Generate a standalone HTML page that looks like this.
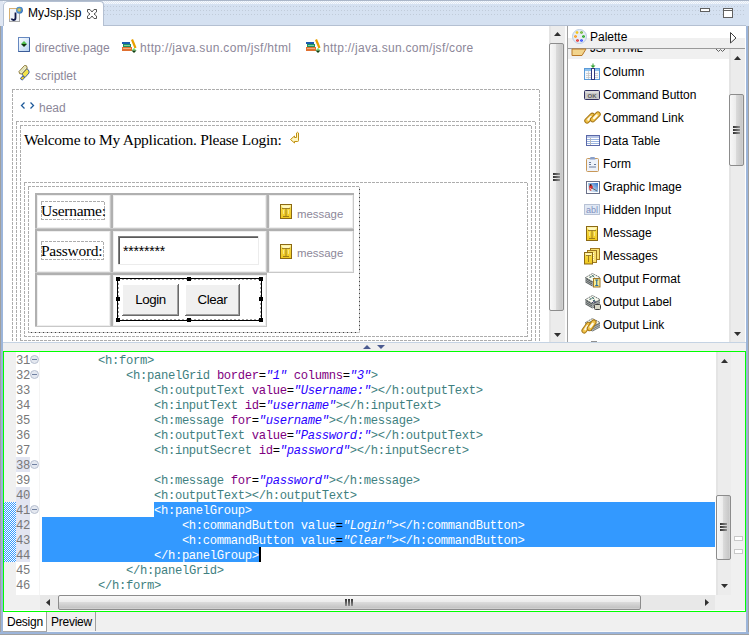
<!DOCTYPE html>
<html><head><meta charset="utf-8"><style>
*{margin:0;padding:0;box-sizing:border-box}
html,body{width:749px;height:635px;overflow:hidden;background:#f0f0f0;font-family:"Liberation Sans",sans-serif;font-size:12px;color:#000}
.a{position:absolute;white-space:nowrap}
.lbl{color:#8c8799;font-size:12px}
.code{left:42px;font-family:"Liberation Mono",monospace;font-size:12.2px;letter-spacing:-0.32px;line-height:15px;padding-top:2px;white-space:pre;color:#000}
.sel span{color:#fff!important}
.t{color:#3f7f7f}.n{color:#7f007f}.v{color:#2a00ff;font-style:italic}
.ln{left:16px;font-family:"Liberation Mono",monospace;font-size:12.2px;letter-spacing:-0.32px;line-height:15px;padding-top:2px;color:#787878}
.pi{left:603px;font-size:12px;color:#000}
.serif{font-family:"Liberation Serif",serif;font-size:15.5px;letter-spacing:-0.27px}
.msg{font-size:11.4px}
.btn{font-size:13.33px;letter-spacing:-0.4px;text-align:center;line-height:31px}
svg{position:absolute;overflow:visible}
</style></head><body>
<div class="a" style="left:0px;top:0px;width:749px;height:26px;background:#d5e1f1;"></div>
<div class="a" style="left:104px;top:6px;width:641px;height:12px;background:repeating-linear-gradient(90deg,#bcc6d4 0 1px,transparent 1px 3px);-webkit-mask:repeating-linear-gradient(180deg,#000 0 1px,transparent 1px 4px);opacity:.8"></div>
<div class="a" style="left:0px;top:1px;width:749px;height:3px;background:conic-gradient(#f6f9fd 25%,#dfe8f4 0 50%,#f6f9fd 0 75%,#dfe8f4 0);background-size:2px 2px"></div>
<div class="a" style="left:0px;top:0px;width:749px;height:1px;background:#aab6c8;"></div>
<div class="a" style="left:0px;top:1px;width:3px;height:25px;background:#dfe6f2;"></div>
<div class="a" style="left:0px;top:26px;width:1px;height:609px;background:#a0a0a0;"></div>
<div class="a" style="left:1px;top:26px;width:2px;height:609px;background:#9cb5da;"></div>
<div class="a" style="left:746px;top:26px;width:2px;height:609px;background:#9cb5da;"></div>
<div class="a" style="left:748px;top:26px;width:1px;height:609px;background:#a0a0a0;"></div>
<div class="a" style="left:0px;top:632px;width:749px;height:2px;background:#9cb5da;"></div>
<div class="a" style="left:0px;top:634px;width:749px;height:1px;background:#a0a0a0;"></div>
<div class="a" style="left:3px;top:25px;width:743px;height:1px;background:#b4c0d2;"></div>
<div class="a" style="left:3px;top:1px;width:101px;height:25px;background:#fff;border-top-left-radius:5px;border-top-right-radius:4px;border:1px solid #b4c0d2;border-bottom:none"></div>
<div class="a " style="left:28px;top:6px;">MyJsp.jsp</div>
<div class="a" style="left:3px;top:26px;width:546px;height:316px;background:#fff;"></div>
<div class="a" style="left:3px;top:342px;width:743px;height:1px;background:#c5d3e3;"></div>
<div class="a" style="left:549px;top:26px;width:16px;height:316px;background:#ececec;"></div>
<div class="a" style="left:549px;top:26px;width:2px;height:316px;background:#e4e4e4;"></div>
<div class="a" style="left:565px;top:26px;width:2px;height:316px;background:#fcfcfc;"></div>
<div class="a" style="left:567px;top:26px;width:1px;height:316px;background:#a0a0a0;"></div>
<div class="a" style="left:549px;top:43px;width:15px;height:268px;border:1px solid #8c8c8c;border-radius:2px;background:linear-gradient(90deg,#f8f8f8 0,#ececec 45%,#dadada 50%,#c8c8c8 90%,#d6d6d6 100%)"></div><div class="a" style="left:553px;top:173px;width:7px;height:2px;background:linear-gradient(90deg,#303030,#909090)"></div><div class="a" style="left:553px;top:176px;width:7px;height:2px;background:linear-gradient(90deg,#303030,#909090)"></div><div class="a" style="left:553px;top:179px;width:7px;height:2px;background:linear-gradient(90deg,#303030,#909090)"></div>
<div class="a" style="left:0;top:0;width:549px;height:342px;overflow:hidden"><div class="a lbl" style="left:35px;top:41px;">directive.page</div>
<div class="a lbl" style="left:140px;top:41px;letter-spacing:0.33px">http://java.sun.com/jsf/html</div>
<div class="a lbl" style="left:323px;top:41px;letter-spacing:0.28px">http://java.sun.com/jsf/core</div>
<div class="a lbl" style="left:35px;top:69px;">scriptlet</div>
<div class="a lbl" style="left:39px;top:101px;">head</div>
<div class="a" style="left:12px;top:89px;width:527px;height:1px;background:repeating-linear-gradient(90deg,#adadad 0 3px,transparent 3px 4px);"></div><div class="a" style="left:12px;top:400px;width:527px;height:1px;background:repeating-linear-gradient(90deg,#adadad 0 3px,transparent 3px 4px);"></div><div class="a" style="left:12px;top:90px;width:1px;height:311px;background:repeating-linear-gradient(180deg,#adadad 0 3px,transparent 3px 4px);"></div><div class="a" style="left:539px;top:90px;width:1px;height:311px;background:repeating-linear-gradient(180deg,#adadad 0 3px,transparent 3px 4px);"></div>
<div class="a" style="left:16px;top:121px;width:519px;height:1px;background:repeating-linear-gradient(90deg,#adadad 0 3px,transparent 3px 4px);"></div><div class="a" style="left:16px;top:400px;width:519px;height:1px;background:repeating-linear-gradient(90deg,#adadad 0 3px,transparent 3px 4px);"></div><div class="a" style="left:16px;top:122px;width:1px;height:279px;background:repeating-linear-gradient(180deg,#adadad 0 3px,transparent 3px 4px);"></div><div class="a" style="left:535px;top:122px;width:1px;height:279px;background:repeating-linear-gradient(180deg,#adadad 0 3px,transparent 3px 4px);"></div>
<div class="a" style="left:20px;top:125px;width:511px;height:1px;background:repeating-linear-gradient(90deg,#adadad 0 3px,transparent 3px 4px);"></div><div class="a" style="left:20px;top:340px;width:511px;height:1px;background:repeating-linear-gradient(90deg,#adadad 0 3px,transparent 3px 4px);"></div><div class="a" style="left:20px;top:126px;width:1px;height:215px;background:repeating-linear-gradient(180deg,#adadad 0 3px,transparent 3px 4px);"></div><div class="a" style="left:531px;top:126px;width:1px;height:215px;background:repeating-linear-gradient(180deg,#adadad 0 3px,transparent 3px 4px);"></div>
<div class="a" style="left:24px;top:182px;width:503px;height:1px;background:repeating-linear-gradient(90deg,#adadad 0 3px,transparent 3px 4px);"></div><div class="a" style="left:24px;top:336px;width:503px;height:1px;background:repeating-linear-gradient(90deg,#adadad 0 3px,transparent 3px 4px);"></div><div class="a" style="left:24px;top:183px;width:1px;height:154px;background:repeating-linear-gradient(180deg,#adadad 0 3px,transparent 3px 4px);"></div><div class="a" style="left:527px;top:183px;width:1px;height:154px;background:repeating-linear-gradient(180deg,#adadad 0 3px,transparent 3px 4px);"></div>
<div class="a" style="left:28px;top:186px;width:331px;height:1px;background:repeating-linear-gradient(90deg,#adadad 0 3px,transparent 3px 4px);"></div><div class="a" style="left:28px;top:332px;width:331px;height:1px;background:repeating-linear-gradient(90deg,#adadad 0 3px,transparent 3px 4px);"></div><div class="a" style="left:28px;top:187px;width:1px;height:146px;background:repeating-linear-gradient(180deg,#adadad 0 3px,transparent 3px 4px);"></div><div class="a" style="left:359px;top:187px;width:1px;height:146px;background:repeating-linear-gradient(180deg,#adadad 0 3px,transparent 3px 4px);"></div>
<div class="a" style="left:29px;top:332px;width:330px;height:1px;background:repeating-linear-gradient(90deg,#c8c8c8 0 2px,#404040 2px 3px,#c8c8c8 3px 4px);"></div>
<div class="a" style="left:359px;top:187px;width:1px;height:146px;background:repeating-linear-gradient(180deg,#c8c8c8 0 2px,#404040 2px 3px,#c8c8c8 3px 4px);"></div>
<div class="a serif" style="left:24px;top:131px;">Welcome to My Application. Please Login:</div>
<div class="a" style="left:35px;top:193px;width:76px;height:2px;background:#b0b0b0;"></div>
<div class="a" style="left:35px;top:193px;width:2px;height:35px;background:#b0b0b0;"></div>
<div class="a" style="left:35px;top:228px;width:76px;height:1px;background:#c8c8c8;"></div>
<div class="a" style="left:110px;top:195px;width:1px;height:34px;background:#c8c8c8;"></div>
<div class="a" style="left:37px;top:195px;width:73px;height:1px;background:#eeeeee;"></div>
<div class="a" style="left:37px;top:195px;width:1px;height:32px;background:#eeeeee;"></div>
<div class="a" style="left:37px;top:227px;width:73px;height:1px;background:#eeeeee;"></div>
<div class="a" style="left:109px;top:195px;width:1px;height:33px;background:#eeeeee;"></div>
<div class="a" style="left:111px;top:193px;width:156px;height:2px;background:#b0b0b0;"></div>
<div class="a" style="left:111px;top:193px;width:2px;height:35px;background:#b0b0b0;"></div>
<div class="a" style="left:111px;top:228px;width:156px;height:1px;background:#c8c8c8;"></div>
<div class="a" style="left:266px;top:195px;width:1px;height:34px;background:#c8c8c8;"></div>
<div class="a" style="left:113px;top:195px;width:153px;height:1px;background:#eeeeee;"></div>
<div class="a" style="left:113px;top:195px;width:1px;height:32px;background:#eeeeee;"></div>
<div class="a" style="left:113px;top:227px;width:153px;height:1px;background:#eeeeee;"></div>
<div class="a" style="left:265px;top:195px;width:1px;height:33px;background:#eeeeee;"></div>
<div class="a" style="left:267px;top:193px;width:87px;height:2px;background:#b0b0b0;"></div>
<div class="a" style="left:267px;top:193px;width:2px;height:35px;background:#b0b0b0;"></div>
<div class="a" style="left:267px;top:228px;width:87px;height:1px;background:#c8c8c8;"></div>
<div class="a" style="left:353px;top:195px;width:1px;height:34px;background:#c8c8c8;"></div>
<div class="a" style="left:269px;top:195px;width:84px;height:1px;background:#eeeeee;"></div>
<div class="a" style="left:269px;top:195px;width:1px;height:32px;background:#eeeeee;"></div>
<div class="a" style="left:269px;top:227px;width:84px;height:1px;background:#eeeeee;"></div>
<div class="a" style="left:352px;top:195px;width:1px;height:33px;background:#eeeeee;"></div>
<div class="a" style="left:35px;top:229px;width:76px;height:2px;background:#b0b0b0;"></div>
<div class="a" style="left:35px;top:229px;width:2px;height:43px;background:#b0b0b0;"></div>
<div class="a" style="left:35px;top:272px;width:76px;height:1px;background:#c8c8c8;"></div>
<div class="a" style="left:110px;top:231px;width:1px;height:42px;background:#c8c8c8;"></div>
<div class="a" style="left:37px;top:231px;width:73px;height:1px;background:#eeeeee;"></div>
<div class="a" style="left:37px;top:231px;width:1px;height:40px;background:#eeeeee;"></div>
<div class="a" style="left:37px;top:271px;width:73px;height:1px;background:#eeeeee;"></div>
<div class="a" style="left:109px;top:231px;width:1px;height:41px;background:#eeeeee;"></div>
<div class="a" style="left:111px;top:229px;width:156px;height:2px;background:#b0b0b0;"></div>
<div class="a" style="left:111px;top:229px;width:2px;height:43px;background:#b0b0b0;"></div>
<div class="a" style="left:111px;top:272px;width:156px;height:1px;background:#c8c8c8;"></div>
<div class="a" style="left:266px;top:231px;width:1px;height:42px;background:#c8c8c8;"></div>
<div class="a" style="left:113px;top:231px;width:153px;height:1px;background:#eeeeee;"></div>
<div class="a" style="left:113px;top:231px;width:1px;height:40px;background:#eeeeee;"></div>
<div class="a" style="left:113px;top:271px;width:153px;height:1px;background:#eeeeee;"></div>
<div class="a" style="left:265px;top:231px;width:1px;height:41px;background:#eeeeee;"></div>
<div class="a" style="left:267px;top:229px;width:87px;height:2px;background:#b0b0b0;"></div>
<div class="a" style="left:267px;top:229px;width:2px;height:43px;background:#b0b0b0;"></div>
<div class="a" style="left:267px;top:272px;width:87px;height:1px;background:#c8c8c8;"></div>
<div class="a" style="left:353px;top:231px;width:1px;height:42px;background:#c8c8c8;"></div>
<div class="a" style="left:269px;top:231px;width:84px;height:1px;background:#eeeeee;"></div>
<div class="a" style="left:269px;top:231px;width:1px;height:40px;background:#eeeeee;"></div>
<div class="a" style="left:269px;top:271px;width:84px;height:1px;background:#eeeeee;"></div>
<div class="a" style="left:352px;top:231px;width:1px;height:41px;background:#eeeeee;"></div>
<div class="a" style="left:35px;top:273px;width:76px;height:2px;background:#b0b0b0;"></div>
<div class="a" style="left:35px;top:273px;width:2px;height:53px;background:#b0b0b0;"></div>
<div class="a" style="left:35px;top:326px;width:76px;height:1px;background:#c8c8c8;"></div>
<div class="a" style="left:110px;top:275px;width:1px;height:52px;background:#c8c8c8;"></div>
<div class="a" style="left:37px;top:275px;width:73px;height:1px;background:#eeeeee;"></div>
<div class="a" style="left:37px;top:275px;width:1px;height:50px;background:#eeeeee;"></div>
<div class="a" style="left:37px;top:325px;width:73px;height:1px;background:#eeeeee;"></div>
<div class="a" style="left:109px;top:275px;width:1px;height:51px;background:#eeeeee;"></div>
<div class="a" style="left:111px;top:273px;width:156px;height:2px;background:#b0b0b0;"></div>
<div class="a" style="left:111px;top:273px;width:2px;height:53px;background:#b0b0b0;"></div>
<div class="a" style="left:111px;top:326px;width:156px;height:1px;background:#c8c8c8;"></div>
<div class="a" style="left:266px;top:275px;width:1px;height:52px;background:#c8c8c8;"></div>
<div class="a" style="left:113px;top:275px;width:153px;height:1px;background:#eeeeee;"></div>
<div class="a" style="left:113px;top:275px;width:1px;height:50px;background:#eeeeee;"></div>
<div class="a" style="left:113px;top:325px;width:153px;height:1px;background:#eeeeee;"></div>
<div class="a" style="left:265px;top:275px;width:1px;height:51px;background:#eeeeee;"></div>
<div class="a" style="left:41px;top:201px;width:63px;height:1px;background:repeating-linear-gradient(90deg,#adadad 0 3px,transparent 3px 4px);"></div><div class="a" style="left:41px;top:219px;width:63px;height:1px;background:repeating-linear-gradient(90deg,#adadad 0 3px,transparent 3px 4px);"></div><div class="a" style="left:41px;top:202px;width:1px;height:18px;background:repeating-linear-gradient(180deg,#adadad 0 3px,transparent 3px 4px);"></div><div class="a" style="left:104px;top:202px;width:1px;height:18px;background:repeating-linear-gradient(180deg,#adadad 0 3px,transparent 3px 4px);"></div>
<div class="a" style="left:41px;top:241px;width:62px;height:1px;background:repeating-linear-gradient(90deg,#adadad 0 3px,transparent 3px 4px);"></div><div class="a" style="left:41px;top:259px;width:62px;height:1px;background:repeating-linear-gradient(90deg,#adadad 0 3px,transparent 3px 4px);"></div><div class="a" style="left:41px;top:242px;width:1px;height:18px;background:repeating-linear-gradient(180deg,#adadad 0 3px,transparent 3px 4px);"></div><div class="a" style="left:103px;top:242px;width:1px;height:18px;background:repeating-linear-gradient(180deg,#adadad 0 3px,transparent 3px 4px);"></div>
<div class="a serif" style="left:41px;top:202px;">Username:</div>
<div class="a serif" style="left:41px;top:242px;">Password:</div>
<div class="a" style="left:118px;top:236px;width:141px;height:29px;background:#fff;"></div>
<div class="a" style="left:118px;top:236px;width:141px;height:1px;background:#808080;"></div>
<div class="a" style="left:118px;top:237px;width:140px;height:1px;background:#5a5a5a;"></div>
<div class="a" style="left:118px;top:236px;width:1px;height:29px;background:#808080;"></div>
<div class="a" style="left:119px;top:237px;width:1px;height:27px;background:#5a5a5a;"></div>
<div class="a" style="left:118px;top:264px;width:141px;height:1px;background:#ececec;"></div>
<div class="a" style="left:258px;top:236px;width:1px;height:29px;background:#ececec;"></div>
<div class="a " style="left:123px;top:243px;font-size:14px;letter-spacing:-0.2px">********</div>
<div class="a lbl msg" style="left:297px;top:208px;">message</div>
<div class="a lbl msg" style="left:297px;top:247px;">message</div>
<div class="a" style="left:122px;top:284px;width:57px;height:32px;background:#f0f0f0;"></div><div class="a" style="left:122px;top:284px;width:57px;height:1px;background:#fff;"></div><div class="a" style="left:122px;top:284px;width:1px;height:32px;background:#fff;"></div><div class="a" style="left:122px;top:315px;width:57px;height:1px;background:#696969;"></div><div class="a" style="left:178px;top:284px;width:1px;height:32px;background:#696969;"></div><div class="a" style="left:123px;top:314px;width:55px;height:1px;background:#a0a0a0;"></div><div class="a" style="left:177px;top:285px;width:1px;height:30px;background:#a0a0a0;"></div><div class="a btn" style="left:122px;top:284px;width:57px;height:32px">Login</div>
<div class="a" style="left:185px;top:284px;width:55px;height:32px;background:#f0f0f0;"></div><div class="a" style="left:185px;top:284px;width:55px;height:1px;background:#fff;"></div><div class="a" style="left:185px;top:284px;width:1px;height:32px;background:#fff;"></div><div class="a" style="left:185px;top:315px;width:55px;height:1px;background:#696969;"></div><div class="a" style="left:239px;top:284px;width:1px;height:32px;background:#696969;"></div><div class="a" style="left:186px;top:314px;width:53px;height:1px;background:#a0a0a0;"></div><div class="a" style="left:238px;top:285px;width:1px;height:30px;background:#a0a0a0;"></div><div class="a btn" style="left:185px;top:284px;width:55px;height:32px">Clear</div>
<div class="a" style="left:117px;top:278px;width:145px;height:1px;background:#000;"></div>
<div class="a" style="left:117px;top:320px;width:145px;height:1px;background:#000;"></div>
<div class="a" style="left:117px;top:278px;width:1px;height:43px;background:#000;"></div>
<div class="a" style="left:261px;top:278px;width:1px;height:43px;background:#000;"></div>
<div class="a" style="left:118px;top:279px;width:142px;height:1px;background:repeating-linear-gradient(90deg,#a0a0a0 0 2px,transparent 2px 4px);"></div>
<div class="a" style="left:118px;top:319px;width:142px;height:1px;background:repeating-linear-gradient(90deg,#a0a0a0 0 2px,transparent 2px 4px);"></div>
<div class="a" style="left:118px;top:279px;width:1px;height:41px;background:repeating-linear-gradient(180deg,#a0a0a0 0 2px,transparent 2px 4px);"></div>
<div class="a" style="left:260px;top:279px;width:1px;height:41px;background:repeating-linear-gradient(180deg,#a0a0a0 0 2px,transparent 2px 4px);"></div>
<div class="a" style="left:116px;top:277px;width:4px;height:4px;background:#000;"></div>
<div class="a" style="left:187px;top:277px;width:4px;height:4px;background:#000;"></div>
<div class="a" style="left:259px;top:277px;width:4px;height:4px;background:#000;"></div>
<div class="a" style="left:116px;top:297px;width:4px;height:4px;background:#000;"></div>
<div class="a" style="left:259px;top:297px;width:4px;height:4px;background:#000;"></div>
<div class="a" style="left:116px;top:318px;width:4px;height:4px;background:#000;"></div>
<div class="a" style="left:187px;top:318px;width:4px;height:4px;background:#000;"></div>
<div class="a" style="left:259px;top:318px;width:4px;height:4px;background:#000;"></div></div>
<div class="a" style="left:568px;top:26px;width:178px;height:316px;background:#fff;"></div>
<div class="a" style="left:568px;top:26px;width:177px;height:22px;background:linear-gradient(#fff 0,#fff 12px,#f0f0f0 12px);"></div>
<div class="a" style="left:568px;top:48px;width:177px;height:1px;background:#9a9a9a;"></div>
<div class="a " style="left:590px;top:30px;">Palette</div>
<div class="a" style="left:568px;top:49px;width:161px;height:10px;background:#f0f0f0;"></div>
<div class="a " style="left:590px;top:41px;color:#000;letter-spacing:-0.6px;clip-path:inset(8px 0 0 0)">JSF HTML</div>
<div class="a" style="left:729px;top:49px;width:16px;height:293px;background:#ececec;"></div>
<div class="a" style="left:729px;top:49px;width:2px;height:293px;background:#e4e4e4;"></div>
<div class="a" style="left:729px;top:94px;width:15px;height:72px;border:1px solid #8c8c8c;border-radius:2px;background:linear-gradient(90deg,#f8f8f8 0,#ececec 45%,#dadada 50%,#c8c8c8 90%,#d6d6d6 100%)"></div><div class="a" style="left:733px;top:126px;width:7px;height:2px;background:linear-gradient(90deg,#303030,#909090)"></div><div class="a" style="left:733px;top:129px;width:7px;height:2px;background:linear-gradient(90deg,#303030,#909090)"></div><div class="a" style="left:733px;top:132px;width:7px;height:2px;background:linear-gradient(90deg,#303030,#909090)"></div>
<div class="a pi" style="left:603px;top:65px;">Column</div>
<div class="a pi" style="left:603px;top:88px;">Command Button</div>
<div class="a pi" style="left:603px;top:111px;">Command Link</div>
<div class="a pi" style="left:603px;top:134px;">Data Table</div>
<div class="a pi" style="left:603px;top:157px;">Form</div>
<div class="a pi" style="left:603px;top:180px;">Graphic Image</div>
<div class="a pi" style="left:603px;top:203px;">Hidden Input</div>
<div class="a pi" style="left:603px;top:226px;">Message</div>
<div class="a pi" style="left:603px;top:249px;">Messages</div>
<div class="a pi" style="left:603px;top:272px;">Output Format</div>
<div class="a pi" style="left:603px;top:295px;">Output Label</div>
<div class="a pi" style="left:603px;top:318px;">Output Link</div>
<div class="a" style="left:3px;top:351px;width:743px;height:261px;border:1px solid #00ff00;background:#fff"></div>
<div class="a" style="left:4px;top:352px;width:12px;height:243px;background:#f0f0f0;"></div>
<div class="a" style="left:39px;top:352px;width:1px;height:243px;background:#f4f4f4;"></div>
<div class="a" style="left:716px;top:352px;width:15px;height:243px;background:#ececec;"></div>
<div class="a" style="left:716px;top:352px;width:2px;height:243px;background:#e4e4e4;"></div>
<div class="a" style="left:731px;top:352px;width:14px;height:258px;background:#f0f0f0;"></div>
<div class="a" style="left:4px;top:595px;width:741px;height:15px;background:#f0f0f0;"></div>
<div class="a" style="left:40px;top:595px;width:675px;height:15px;background:#e8e8e8;"></div>
<div class="a" style="left:716px;top:495px;width:15px;height:65px;border:1px solid #8c8c8c;border-radius:2px;background:linear-gradient(90deg,#f8f8f8 0,#ececec 45%,#dadada 50%,#c8c8c8 90%,#d6d6d6 100%)"></div><div class="a" style="left:720px;top:523px;width:7px;height:2px;background:linear-gradient(90deg,#303030,#909090)"></div><div class="a" style="left:720px;top:526px;width:7px;height:2px;background:linear-gradient(90deg,#303030,#909090)"></div><div class="a" style="left:720px;top:529px;width:7px;height:2px;background:linear-gradient(90deg,#303030,#909090)"></div>
<div class="a" style="left:58px;top:595px;width:583px;height:15px;border:1px solid #8c8c8c;border-radius:2px;background:linear-gradient(180deg,#f8f8f8 0,#ececec 45%,#dadada 50%,#c4c4c4 90%,#d6d6d6 100%)"></div><div class="a" style="left:345px;top:599px;width:2px;height:7px;background:linear-gradient(180deg,#303030,#909090)"></div><div class="a" style="left:348px;top:599px;width:2px;height:7px;background:linear-gradient(180deg,#303030,#909090)"></div><div class="a" style="left:351px;top:599px;width:2px;height:7px;background:linear-gradient(180deg,#303030,#909090)"></div>
<div class="a" style="left:734px;top:536px;width:9px;height:5px;background:#fff;border:1px solid #c8c8c8"></div>
<div class="a" style="left:734px;top:549px;width:9px;height:5px;background:#fff;border:1px solid #c8c8c8"></div>
<div class="a" style="left:4px;top:502px;width:12px;height:60px;background:conic-gradient(#3399ff 25%,#fff 0 50%,#3399ff 0 75%,#fff 0);background-size:2px 2px"></div>
<div class="a" style="left:16px;top:457px;width:14px;height:15px;background:#e2e5f1;"></div>
<div class="a" style="left:16px;top:487px;width:14px;height:15px;background:#e2e5f1;"></div>
<div class="a" style="left:16px;top:502px;width:14px;height:15px;background:#e2e5f1;"></div>
<div class="a" style="left:16px;top:517px;width:14px;height:15px;background:#e2e5f1;"></div>
<div class="a" style="left:16px;top:532px;width:14px;height:15px;background:#e2e5f1;"></div>
<div class="a" style="left:16px;top:547px;width:14px;height:15px;background:#e2e5f1;"></div>
<div class="a ln" style="left:16px;top:352px;">31</div>
<div class="a ln" style="left:16px;top:367px;">32</div>
<div class="a ln" style="left:16px;top:382px;">33</div>
<div class="a ln" style="left:16px;top:397px;">34</div>
<div class="a ln" style="left:16px;top:412px;">35</div>
<div class="a ln" style="left:16px;top:427px;">36</div>
<div class="a ln" style="left:16px;top:442px;">37</div>
<div class="a ln" style="left:16px;top:457px;">38</div>
<div class="a ln" style="left:16px;top:472px;">39</div>
<div class="a ln" style="left:16px;top:487px;">40</div>
<div class="a ln" style="left:16px;top:502px;">41</div>
<div class="a ln" style="left:16px;top:517px;">42</div>
<div class="a ln" style="left:16px;top:532px;">43</div>
<div class="a ln" style="left:16px;top:547px;">44</div>
<div class="a ln" style="left:16px;top:562px;">45</div>
<div class="a ln" style="left:16px;top:577px;">46</div>
<div class="a" style="left:154px;top:502px;width:561px;height:15px;background:#3399ff;"></div>
<div class="a" style="left:42px;top:517px;width:673px;height:30px;background:#3399ff;"></div>
<div class="a" style="left:42px;top:547px;width:217px;height:15px;background:#3399ff;"></div>
<div class="a" style="left:259px;top:547px;width:2px;height:15px;background:#000;"></div>
<div class="a code" style="top:352px">        <span class="t">&lt;h:form&gt;</span></div>
<div class="a code" style="top:367px">            <span class="t">&lt;h:panelGrid</span> <span class="n">border</span>=<span class="v">"1"</span> <span class="n">columns</span>=<span class="v">"3"</span><span class="t">&gt;</span></div>
<div class="a code" style="top:382px">                <span class="t">&lt;h:outputText</span> <span class="n">value</span>=<span class="v">"Username:"</span><span class="t">&gt;&lt;/h:outputText&gt;</span></div>
<div class="a code" style="top:397px">                <span class="t">&lt;h:inputText</span> <span class="n">id</span>=<span class="v">"username"</span><span class="t">&gt;&lt;/h:inputText&gt;</span></div>
<div class="a code" style="top:412px">                <span class="t">&lt;h:message</span> <span class="n">for</span>=<span class="v">"username"</span><span class="t">&gt;&lt;/h:message&gt;</span></div>
<div class="a code" style="top:427px">                <span class="t">&lt;h:outputText</span> <span class="n">value</span>=<span class="v">"Password:"</span><span class="t">&gt;&lt;/h:outputText&gt;</span></div>
<div class="a code" style="top:442px">                <span class="t">&lt;h:inputSecret</span> <span class="n">id</span>=<span class="v">"password"</span><span class="t">&gt;&lt;/h:inputSecret&gt;</span></div>
<div class="a code" style="top:457px"></div>
<div class="a code" style="top:472px">                <span class="t">&lt;h:message</span> <span class="n">for</span>=<span class="v">"password"</span><span class="t">&gt;&lt;/h:message&gt;</span></div>
<div class="a code" style="top:487px">                <span class="t">&lt;h:outputText&gt;&lt;/h:outputText&gt;</span></div>
<div class="a code sel" style="top:502px">                <span class="t">&lt;h:panelGroup&gt;</span></div>
<div class="a code sel" style="top:517px">                    <span class="t">&lt;h:commandButton</span> <span class="n">value</span>=<span class="v">"Login"</span><span class="t">&gt;&lt;/h:commandButton&gt;</span></div>
<div class="a code sel" style="top:532px">                    <span class="t">&lt;h:commandButton</span> <span class="n">value</span>=<span class="v">"Clear"</span><span class="t">&gt;&lt;/h:commandButton&gt;</span></div>
<div class="a code sel" style="top:547px">                <span class="t">&lt;/h:panelGroup&gt;</span></div>
<div class="a code" style="top:562px">            <span class="t">&lt;/h:panelGrid&gt;</span></div>
<div class="a code" style="top:577px">        <span class="t">&lt;/h:form&gt;</span></div>
<div class="a" style="left:3px;top:631px;width:743px;height:1px;background:#f8f8f8;"></div>
<div class="a" style="left:3px;top:612px;width:44px;height:19px;background:#fff;"></div>
<div class="a" style="left:3px;top:631px;width:44px;height:1px;background:#a8a8a8;"></div>
<div class="a" style="left:46px;top:612px;width:1px;height:19px;background:#a0a0a0;"></div>
<div class="a" style="left:95px;top:612px;width:1px;height:19px;background:#a0a0a0;"></div>
<div class="a " style="left:7px;top:615px;letter-spacing:-0.25px">Design</div>
<div class="a " style="left:51px;top:615px;letter-spacing:-0.25px">Preview</div>
<svg width="749" height="635" style="left:0;top:0"><rect x="9.5" y="8.5" width="10" height="13" fill="#eef2f8" stroke="#a8a8a8"/><path d="M9.5 8.5 H17 M9.5 8.5 V19" stroke="#d8b070" fill="none"/><path d="M15.5 12.5 V18 Q15.5 20 13.5 20 Q12 20 11.5 18.5" stroke="#101848" stroke-width="1.8" fill="none"/><defs><radialGradient id="glb" cx="0.45" cy="0.45" r="0.6"><stop offset="0" stop-color="#f8e070"/><stop offset="0.3" stop-color="#c0b050"/><stop offset="0.6" stop-color="#4a90d0"/><stop offset="1" stop-color="#2a62b0"/></radialGradient></defs><circle cx="19.5" cy="10.2" r="3.4" fill="url(#glb)"/><path d="M87.5 9.5 H90 L92 12 L94 9.5 H96.5 V12 L94 14 L96.5 16 V18.5 H94 L92 16 L90 18.5 H87.5 V16 L90 14 L87.5 12 Z" fill="#fff" stroke="#555" stroke-width="1"/><defs><linearGradient id="pg" x1="0" y1="0" x2="1" y2="1"><stop offset="0" stop-color="#fff"/><stop offset="1" stop-color="#b4d2f2"/></linearGradient><linearGradient id="thumbv" x1="0" y1="0" x2="1" y2="0"><stop offset="0" stop-color="#f6f6f6"/><stop offset="0.45" stop-color="#ececec"/><stop offset="0.5" stop-color="#dcdcdc"/><stop offset="0.9" stop-color="#c8c8c8"/><stop offset="1" stop-color="#d8d8d8"/></linearGradient><linearGradient id="thumbh" x1="0" y1="0" x2="0" y2="1"><stop offset="0" stop-color="#f6f6f6"/><stop offset="0.45" stop-color="#ececec"/><stop offset="0.5" stop-color="#dcdcdc"/><stop offset="0.9" stop-color="#c4c4c4"/><stop offset="1" stop-color="#d8d8d8"/></linearGradient><linearGradient id="env" x1="0" y1="0" x2="0" y2="1"><stop offset="0" stop-color="#fff2a0"/><stop offset="0.3" stop-color="#f5d840"/><stop offset="1" stop-color="#f0c820"/></linearGradient></defs><rect x="18.5" y="37.5" width="11" height="14" fill="url(#pg)" stroke="#6688c0"/><path d="M29.5 38 V51.5 H18.5" stroke="#3c5c98" fill="none"/><path d="M24 41 L27 44 L21 44 Z" fill="#50c050"/><path d="M21 44 L27 44 L24 47 Z" fill="#103810"/><g transform="translate(0,0)"><rect x="122" y="42" width="8" height="2" fill="#1a5cb0"/><rect x="123" y="44" width="8" height="3" fill="#1e9060"/><rect x="124" y="45" width="6" height="1" fill="#80d0a0"/><rect x="122" y="47" width="10" height="4" fill="#e07030"/><rect x="123" y="48" width="8" height="1" fill="#f0b080"/><path d="M132 39.5 L135.5 48" stroke="#e8a000" stroke-width="2.2"/><path d="M134 48 L136.5 50.5 L131.5 50.5 Z" fill="#70e070"/><path d="M131.5 50.5 L136.5 50.5 L134 53 Z" fill="#104010"/></g><g transform="translate(184,0)"><rect x="122" y="42" width="8" height="2" fill="#1a5cb0"/><rect x="123" y="44" width="8" height="3" fill="#1e9060"/><rect x="124" y="45" width="6" height="1" fill="#80d0a0"/><rect x="122" y="47" width="10" height="4" fill="#e07030"/><rect x="123" y="48" width="8" height="1" fill="#f0b080"/><path d="M132 39.5 L135.5 48" stroke="#e8a000" stroke-width="2.2"/><path d="M134 48 L136.5 50.5 L131.5 50.5 Z" fill="#70e070"/><path d="M131.5 50.5 L136.5 50.5 L134 53 Z" fill="#104010"/></g><path d="M22 74 L27 68.5 L29 71 L29 73 L25 77.5 L23.5 76.5 Z" fill="#f2e24a" stroke="#3050a0" stroke-width="0.9"/><path d="M19 71.5 L24.5 65.5 L26.5 65.8 L27.2 68 L21.8 74 L19.6 73.6 Z" fill="#f4f2cc" stroke="#806c28" stroke-width="0.9"/><path d="M20.5 72.5 L25.5 67" stroke="#c8d0a0" stroke-width="0.8"/><path d="M21 77.5 L23.5 76 L24.5 78 L22.2 80 L20.6 79 Z" fill="#f8d820" stroke="#3050a0" stroke-width="0.9"/><path d="M24.5 102.5 L21.5 105.5 L24.5 108.5 M30.5 102.5 L33.5 105.5 L30.5 108.5" stroke="#1f5a9a" stroke-width="1.3" fill="none"/><path d="M296.5 133 Q297.5 131.5 298.5 133 V140.5 Q298.5 141.5 297.5 141.5 H294.5 V143 L290.5 139.5 L294.5 136 V137.5 H296.5 Z" fill="#fff6c0" stroke="#c09010" stroke-width="1"/><g transform="translate(280,204)"><rect x="0.5" y="0.5" width="11" height="14" fill="url(#env)" stroke="#8b6914"/><path d="M1 1.5 H11 L8.5 4.5 H3.5 Z" fill="#fff8c0"/><path d="M2 4.5 H10 M6 4.5 V12 M3 12.5 H9" stroke="#8b6914" stroke-width="0.8"/><path d="M3.5 6.5 V10.5 M8.5 6.5 V10.5" stroke="#fffce0" stroke-width="1" stroke-dasharray="1 1"/></g><g transform="translate(280,244)"><rect x="0.5" y="0.5" width="11" height="14" fill="url(#env)" stroke="#8b6914"/><path d="M1 1.5 H11 L8.5 4.5 H3.5 Z" fill="#fff8c0"/><path d="M2 4.5 H10 M6 4.5 V12 M3 12.5 H9" stroke="#8b6914" stroke-width="0.8"/><path d="M3.5 6.5 V10.5 M8.5 6.5 V10.5" stroke="#fffce0" stroke-width="1" stroke-dasharray="1 1"/></g><g transform="translate(586,226)"><rect x="0.5" y="0.5" width="11" height="14" fill="url(#env)" stroke="#8b6914"/><path d="M1 1.5 H11 L8.5 4.5 H3.5 Z" fill="#fff8c0"/><path d="M2 4.5 H10 M6 4.5 V12 M3 12.5 H9" stroke="#8b6914" stroke-width="0.8"/><path d="M3.5 6.5 V10.5 M8.5 6.5 V10.5" stroke="#fffce0" stroke-width="1" stroke-dasharray="1 1"/></g><circle cx="579.5" cy="36.5" r="7" fill="#e8ecf2" stroke="#b8cce4"/><circle cx="577" cy="32.5" r="1.35" fill="#f0c000"/><circle cx="577" cy="32.5" r="0.45" fill="#fff" opacity="0.5"/><circle cx="581.5" cy="32.5" r="1.35" fill="#60b020"/><circle cx="581.5" cy="32.5" r="0.45" fill="#fff" opacity="0.5"/><circle cx="575.5" cy="36.5" r="1.35" fill="#ff9000"/><circle cx="575.5" cy="36.5" r="0.45" fill="#fff" opacity="0.5"/><circle cx="583.5" cy="36.5" r="1.35" fill="#10a010"/><circle cx="583.5" cy="36.5" r="0.45" fill="#fff" opacity="0.5"/><circle cx="577.5" cy="40.5" r="1.35" fill="#e02020"/><circle cx="577.5" cy="40.5" r="0.45" fill="#fff" opacity="0.5"/><circle cx="581.5" cy="40.5" r="1.35" fill="#2040ff"/><circle cx="581.5" cy="40.5" r="0.45" fill="#fff" opacity="0.5"/><path d="M730.5 32.5 L736 38 L730.5 43 Z" fill="#fff" stroke="#404040"/><path d="M572 49 L586 49 L582 55.5 L572 55.5 Z" fill="#f2d48c" stroke="#b87828"/><path d="M716 49 L718.5 51.5 L720.5 49.5 L722.5 51.5 L725 49" stroke="#606060" fill="none"/><rect x="584.5" y="68.5" width="15" height="11" fill="#f4f8fc" stroke="#5a9ad8"/><rect x="585" y="69" width="14" height="2" fill="#8cc0ec"/><path d="M586 73.5 H598 M586 75.5 H598 M586 77.5 H598 M588.5 71 V79" stroke="#c0c0c0" stroke-width="0.7"/><rect x="591.5" y="68.5" width="3" height="11" fill="#fff" stroke="#303880"/><path d="M593 68 L590.5 65.5 H595.5 Z" fill="#30a030"/><path d="M593 63.5 V66" stroke="#30a030"/><rect x="584.5" y="90.5" width="15" height="9" rx="1" fill="#c8c8c8" stroke="#303060"/><rect x="585.5" y="91.5" width="13" height="1" fill="#f0f0f0"/><text x="592" y="98" font-family="Liberation Sans" font-size="6" font-weight="bold" fill="#606060" text-anchor="middle">OK</text><g transform="translate(592.5,117.5) rotate(-45)"><rect x="-8.5" y="-3.8" width="12" height="4.6" rx="2.3" fill="#f2c448" stroke="#a87818" stroke-width="1"/><rect x="-5.5" y="-2.6" width="6" height="2.2" rx="1" fill="#fffae8"/><rect x="-3.5" y="-0.8" width="12" height="4.6" rx="2.3" fill="#f2c448" stroke="#a87818" stroke-width="1"/><rect x="-0.5" y="0.4" width="6" height="2.2" rx="1" fill="#fffae8"/></g><rect x="586.5" y="135.5" width="13" height="10" fill="#fff" stroke="#5a68a8"/><rect x="587" y="136" width="12" height="2" fill="#b8c6e6"/><path d="M587 139.5 H599 M587 141.5 H599 M587 143.5 H599" stroke="#9ab4e0" stroke-width="1"/><path d="M590.5 138 V145" stroke="#b8b8b8" stroke-width="1"/><rect x="586.5" y="158.5" width="12" height="13" rx="1" fill="#eef2fa" stroke="#c89858"/><path d="M589.5 159.5 L590.5 157 H594.5 L595.5 159.5 Z" fill="#8aa0c8"/><path d="M589 162.5 H591 M589 164.5 H591 M594 164.5 H596 M589 167 H596" stroke="#6a7a98" stroke-width="1"/><defs><linearGradient id="sky" x1="1" y1="0" x2="0" y2="1"><stop offset="0" stop-color="#2a70c8"/><stop offset="0.55" stop-color="#a8c8e8"/><stop offset="1" stop-color="#ffffff"/></linearGradient></defs><rect x="586.5" y="181.5" width="13" height="12" fill="#fff" stroke="#6a7088"/><rect x="588" y="183" width="10" height="9" fill="url(#sky)"/><path d="M589 186 L591.5 184.5 L593 187 L591 191 L589.5 190 Z" fill="#d83030"/><circle cx="590.5" cy="185" r="1" fill="#302020"/><path d="M592 188 L597 191" stroke="#505050" stroke-width="0.8"/><path d="M590 188.5 L592.5 190" stroke="#fff" stroke-width="0.8"/><rect x="584.5" y="204.5" width="15" height="10" fill="#e0e8f4" stroke="#8090b0" stroke-dasharray="1 1"/><text x="592" y="213" font-family="Liberation Sans" font-size="9" fill="#8090c0" text-anchor="middle">abl</text><rect x="590.5" y="248.5" width="9" height="11" fill="#f8e070" stroke="#a07820"/><path d="M596.5 251 V258" stroke="#fffce0" stroke-dasharray="1 1"/><rect x="587.5" y="250.5" width="9" height="12" fill="#f8e070" stroke="#a07820"/><path d="M593.5 253 V261" stroke="#fffce0" stroke-dasharray="1 1"/><g transform="translate(584,252)"><rect x="0.5" y="0.5" width="8" height="11.5" fill="url(#env)" stroke="#8b6914"/><path d="M1 1.5 H8 L6.5 3.5 H2.5 Z" fill="#fff8c0"/><path d="M2 3.5 H7 M4.5 3.5 V10" stroke="#8b6914" stroke-width="0.8"/></g><g transform="translate(585,273)"><path d="M0.5 4.5 L7.5 8.5 L7.5 13.5 L0.5 9.5 Z" fill="#505858"/><path d="M7.5 8.5 L15 4.5 L15 9.5 L7.5 13.5 Z" fill="#707878"/><path d="M0.5 6.3 L7.5 10.3 L15 6.3 M0.5 8.1 L7.5 12.1 L15 8.1" stroke="#d8d8d8" stroke-width="0.6" fill="none"/><path d="M0.5 4.5 L7.5 0.5 L15 4.5 L7.5 8.5 Z" fill="#fbfbf0" stroke="#5a6262" stroke-width="0.9" stroke-dasharray="1.4 0.6"/><path d="M4.5 4.5 L6.5 3.5 M8 6 L10 5 M7 2.5 L9 3.5" stroke="#2a6060" stroke-width="1.1"/></g><rect x="593.5" y="278.5" width="6.5" height="8.5" fill="#f8ec90" stroke="#a07828"/><path d="M596.75 279.5 V286 M595.2 280 H598.3 M595.2 285.5 H598.3" stroke="#2a70a0" stroke-width="1.1"/><g transform="translate(585,295)"><path d="M0.5 4.5 L7.5 8.5 L7.5 13.5 L0.5 9.5 Z" fill="#505858"/><path d="M7.5 8.5 L15 4.5 L15 9.5 L7.5 13.5 Z" fill="#707878"/><path d="M0.5 6.3 L7.5 10.3 L15 6.3 M0.5 8.1 L7.5 12.1 L15 8.1" stroke="#d8d8d8" stroke-width="0.6" fill="none"/><path d="M0.5 4.5 L7.5 0.5 L15 4.5 L7.5 8.5 Z" fill="#fbfbf0" stroke="#5a6262" stroke-width="0.9" stroke-dasharray="1.4 0.6"/><path d="M4.5 4.5 L6.5 3.5 M8 6 L10 5 M7 2.5 L9 3.5" stroke="#2a6060" stroke-width="1.1"/></g><rect x="594.5" y="304.5" width="6" height="5" rx="1" fill="#d8d8c8" stroke="#404040"/><path d="M592 303 Q593 301 596 302" stroke="#303060" fill="none"/><g transform="translate(585,318)"><path d="M0.5 4.5 L7.5 8.5 L7.5 13.5 L0.5 9.5 Z" fill="#505858"/><path d="M7.5 8.5 L15 4.5 L15 9.5 L7.5 13.5 Z" fill="#707878"/><path d="M0.5 6.3 L7.5 10.3 L15 6.3 M0.5 8.1 L7.5 12.1 L15 8.1" stroke="#d8d8d8" stroke-width="0.6" fill="none"/><path d="M0.5 4.5 L7.5 0.5 L15 4.5 L7.5 8.5 Z" fill="#fbfbf0" stroke="#5a6262" stroke-width="0.9" stroke-dasharray="1.4 0.6"/><path d="M4.5 4.5 L6.5 3.5 M8 6 L10 5 M7 2.5 L9 3.5" stroke="#2a6060" stroke-width="1.1"/></g><g transform="translate(589,326.5) rotate(-10)"><g transform="translate(-589,-326.5)"><g transform="translate(589,326.5) rotate(-45)"><rect x="-8.5" y="-3.8" width="12" height="4.6" rx="2.3" fill="#f2c448" stroke="#a87818" stroke-width="1"/><rect x="-5.5" y="-2.6" width="6" height="2.2" rx="1" fill="#fffae8"/><rect x="-3.5" y="-0.8" width="12" height="4.6" rx="2.3" fill="#f2c448" stroke="#a87818" stroke-width="1"/><rect x="-0.5" y="0.4" width="6" height="2.2" rx="1" fill="#fffae8"/></g></g></g><path d="M591 341.5 H597" stroke="#909090"/><path d="M554.0 36 L557.5 32 L561.0 36 Z" fill="#303030"/><path d="M554.0 333 L557.5 337 L561.0 333 Z" fill="#303030"/><path d="M734.0 60 L737.5 56 L741.0 60 Z" fill="#303030"/><path d="M734.0 332 L737.5 336 L741.0 332 Z" fill="#303030"/><path d="M721.0 363 L724.5 359 L728.0 363 Z" fill="#303030"/><path d="M721.0 584 L724.5 588 L728.0 584 Z" fill="#303030"/><path d="M50 599 L46 602.5 L50 606 Z" fill="#303030"/><path d="M705 599 L709 602.5 L705 606 Z" fill="#303030"/><path d="M363 349 L367 345 L371 349 Z" fill="#4a5a90"/><path d="M377 345 L385 345 L381 349 Z" fill="#4a5a90"/><rect x="700.5" y="8.5" width="9" height="3" fill="#fff" stroke="#606060"/><rect x="723.5" y="8.5" width="9" height="9" fill="#fff" stroke="#606060"/><path d="M723.5 10.5 H732.5" stroke="#606060"/><circle cx="34.5" cy="359.5" r="4" fill="#e4e8f0" stroke="#b8c0d0"/><path d="M32 359.5 H37" stroke="#7080a0" stroke-width="1"/><circle cx="34.5" cy="374.5" r="4" fill="#e4e8f0" stroke="#b8c0d0"/><path d="M32 374.5 H37" stroke="#7080a0" stroke-width="1"/><circle cx="34.5" cy="464.5" r="4" fill="#e4e8f0" stroke="#b8c0d0"/><path d="M32 464.5 H37" stroke="#7080a0" stroke-width="1"/><circle cx="34.5" cy="509.5" r="4" fill="#e4e8f0" stroke="#b8c0d0"/><path d="M32 509.5 H37" stroke="#7080a0" stroke-width="1"/></svg>
</body></html>
